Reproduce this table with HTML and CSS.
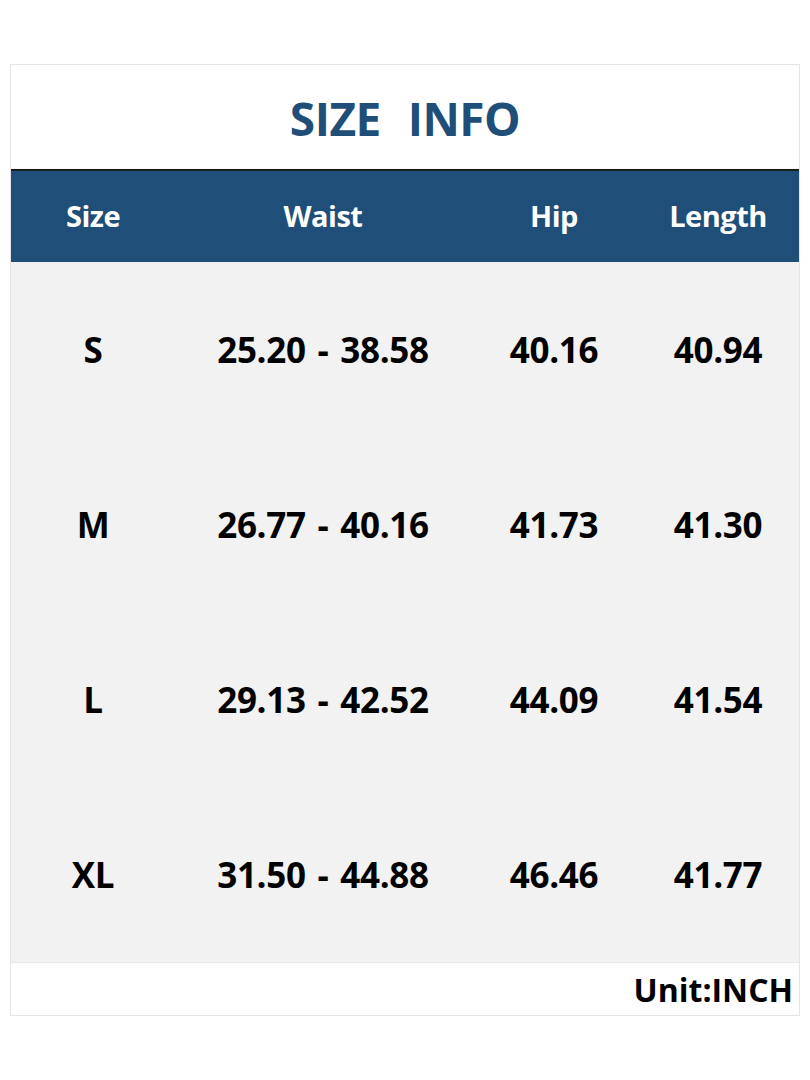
FILE: index.html
```html
<!DOCTYPE html>
<html>
<head>
<meta charset="utf-8">
<link rel="stylesheet" href="styles.css">
</head>
<body>
<div class="sheet">
  <div class="title">SIZE&nbsp;&nbsp;INFO</div>
  <div class="grid head">
    <div>Size</div><div>Waist</div><div>Hip</div><div>Length</div>
  </div>
  <div class="body">
    <div class="grid row"><div>S</div><div>25.20 - 38.58</div><div>40.16</div><div>40.94</div></div>
    <div class="grid row"><div>M</div><div>26.77 - 40.16</div><div>41.73</div><div>41.30</div></div>
    <div class="grid row"><div>L</div><div>29.13 - 42.52</div><div>44.09</div><div>41.54</div></div>
    <div class="grid row"><div>XL</div><div>31.50 - 44.88</div><div>46.46</div><div>41.77</div></div>
  </div>
  <div class="foot">Unit:INCH</div>
</div>
</body>
</html>
```
FILE: styles.css
```css
html, body { margin: 0; padding: 0; background: #fff; }
body { font-family: "Open Sans", "Noto Sans", sans-serif; font-weight: 700; }
.sheet {
  margin: 64px 10px 0 10px;
  width: 790px;
  border: 1px solid #e4e4e4;
  box-sizing: border-box;
}
.title {
  height: 106px;
  display: flex;
  align-items: center;
  justify-content: center;
  color: #1f4e79;
  font-size: 46px;
  letter-spacing: -0.5px;
  word-spacing: 2px;
  border-bottom: 2px solid #1c1c1c;
  padding-top: 2px;
  box-sizing: border-box;
}
.grid {
  display: grid;
  grid-template-columns: 164px 296px 166px 1fr;
  align-items: center;
  text-align: center;
}
.head {
  height: 91px;
  background: #1f4e79;
  color: #fff;
  font-size: 29px;
  letter-spacing: -0.5px;
  padding-bottom: 3px;
  box-sizing: border-box;
}
.body { background: #f2f2f2; }
.row {
  height: 175px;
  color: #000;
  font-size: 35px;
  letter-spacing: -0.3px;
  word-spacing: 3px;
}
.foot {
  height: 52px;
  display: flex;
  align-items: center;
  justify-content: flex-end;
  padding-right: 6px;
  font-size: 32px;
  color: #000;
  letter-spacing: 0;
  border-top: 1px solid #e8e8e8;
}
```
